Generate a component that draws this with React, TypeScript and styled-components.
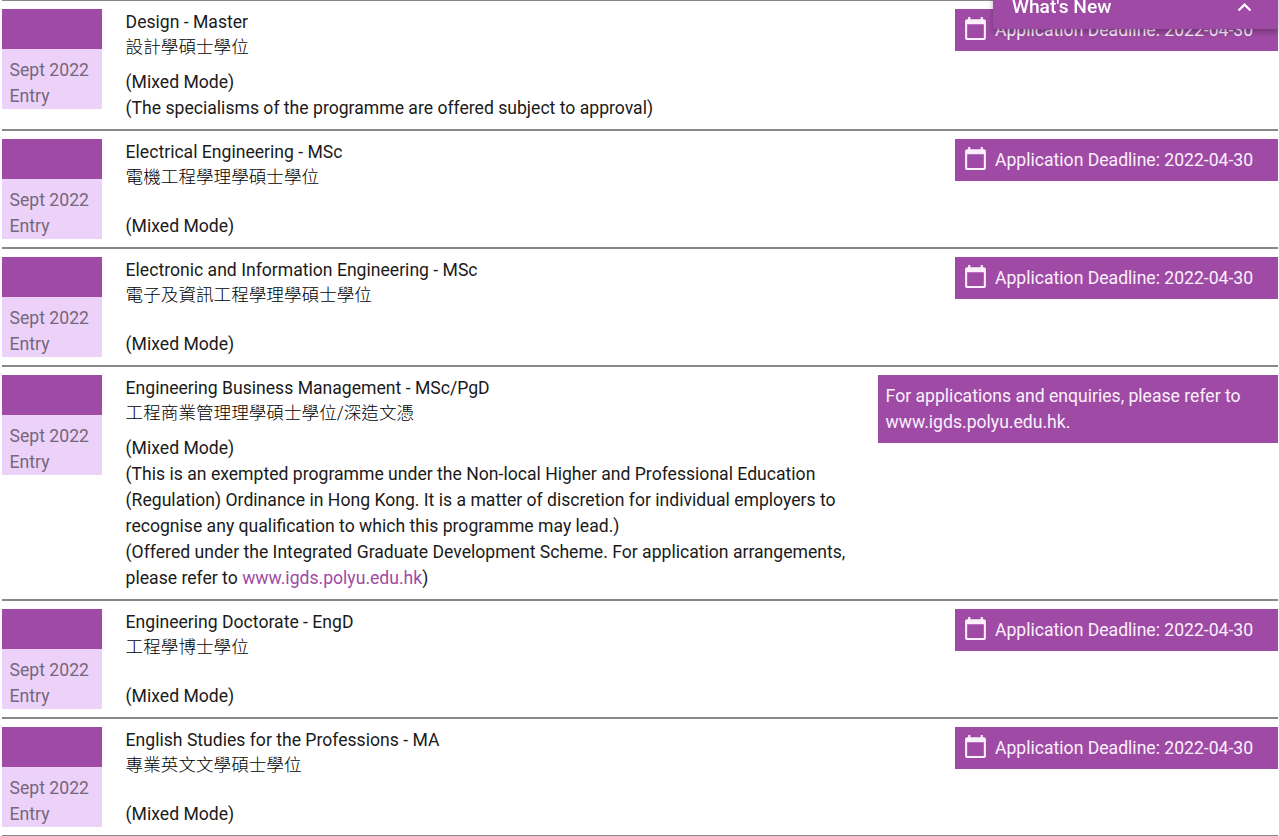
import React from 'react';
import styled, {createGlobalStyle} from 'styled-components';

const GlobalStyle = createGlobalStyle`
  html, body {
    margin: 0;
    height: 836px;
    overflow: hidden;
    background: #fff;
  }

  body {
    font-family: Roboto, "Noto Sans CJK TC", sans-serif;
    font-size: 17.6px;
    line-height: 26px;
    color: #1a1a1a;
  }
`;

const purple = '#9f4ba5';

const WhatsNew = styled.div`
  position: fixed;
  top: -15px;
  right: 1px;
  width: 285px;
  height: 44px;
  box-sizing: border-box;
  padding: 0 20px 0 19px;
  display: flex;
  justify-content: space-between;
  align-items: center;
  background: ${purple};
  color: #fff;
  font-size: 19.2px;
  font-weight: 500;
  box-shadow: 0 3px 6px rgba(0, 0, 0, 0.3);
`;

const List = styled.div`
  margin: 0 1px 0 2px;
  border-top: 1px solid #888;
`;

const Row = styled.div`
  display: flex;
  align-items: flex-start;
  padding: 8px 0;
  border-bottom: 2px solid #888;
`;

const EntryBadge = styled.div`
  flex: 0 0 100px;
  margin-right: 23.6px;
  background: #ecd2f8;
`;

const EntryBar = styled.div`
  height: 40px;
  background: ${purple};
`;

const EntryLabel = styled.div`
  height: 60px;
  padding: 8px 7.6px;
  box-sizing: border-box;
  color: #75677b;
`;

const Details = styled.div`
  flex: 1;
  min-height: 100px;
  display: flex;
  flex-direction: column;
  justify-content: space-between;
`;

const Heading = styled.div`
  margin-bottom: 8px;
`;

const ChineseName = styled.div`
  line-height: 24px;
  padding-bottom: 2px;
  font-weight: 300;
  color: #000;
`;

const Notes = styled.div``;

const NoteLink = styled.a`
  color: ${purple};
  text-decoration: none;
`;

const Deadline = styled.div`
  flex: 0 0 323px;
  box-sizing: border-box;
  height: 42px;
  padding: 0 8px;
  display: flex;
  align-items: center;
  gap: 7px;
  background: ${purple};
  color: #faf0fc;

  svg {
    margin-bottom: 3px;
  }
`;

const Notice = styled.div`
  flex: 0 0 400px;
  box-sizing: border-box;
  padding: 8px 7.6px;
  background: ${purple};
  color: #faf0fc;
`;

type Programme = {
  title: string;
  chinese: string;
  notes: React.ReactNode[];
  notice?: string;
};

const programmes: Programme[] = [
  {
    title: 'Design - Master',
    chinese: '設計學碩士學位',
    notes: ['(Mixed Mode)', '(The specialisms of the programme are offered subject to approval)'],
  },
  {
    title: 'Electrical Engineering - MSc',
    chinese: '電機工程學理學碩士學位',
    notes: ['(Mixed Mode)'],
  },
  {
    title: 'Electronic and Information Engineering - MSc',
    chinese: '電子及資訊工程學理學碩士學位',
    notes: ['(Mixed Mode)'],
  },
  {
    title: 'Engineering Business Management - MSc/PgD',
    chinese: '工程商業管理理學碩士學位/深造文憑',
    notes: [
      '(Mixed Mode)',
      '(This is an exempted programme under the Non-local Higher and Professional Education (Regulation) Ordinance in Hong Kong. It is a matter of discretion for individual employers to recognise any qualification to which this programme may lead.)',
      <>
        (Offered under the Integrated Graduate Development Scheme. For application arrangements, please refer to{' '}
        <NoteLink href="#">www.igds.polyu.edu.hk</NoteLink>)
      </>,
    ],
    notice: 'For applications and enquiries, please refer to www.igds.polyu.edu.hk.',
  },
  {
    title: 'Engineering Doctorate - EngD',
    chinese: '工程學博士學位',
    notes: ['(Mixed Mode)'],
  },
  {
    title: 'English Studies for the Professions - MA',
    chinese: '專業英文文學碩士學位',
    notes: ['(Mixed Mode)'],
  },
];

const CalendarIcon = () => (
  <svg width="25" height="25" viewBox="0 0 24 24" fill="currentColor">
    <path d="M20 3h-1V1h-2v2H7V1H5v2H4c-1.1 0-2 .9-2 2v16c0 1.1.9 2 2 2h16c1.1 0 2-.9 2-2V5c0-1.1-.9-2-2-2zm0 18H4V8h16v13z" />
  </svg>
);

const ChevronUpIcon = () => (
  <svg width="27" height="27" viewBox="0 0 24 24" fill="currentColor">
    <path d="M7.41 15.41L12 10.83l4.59 4.58L18 14l-6-6-6 6z" />
  </svg>
);

const App = () => {
  return (
    <>
      <GlobalStyle />
      <WhatsNew>
        <span>What's New</span>
        <ChevronUpIcon />
      </WhatsNew>
      <List>
        {programmes.map((item) => (
          <Row key={item.title}>
            <EntryBadge>
              <EntryBar />
              <EntryLabel>Sept 2022 Entry</EntryLabel>
            </EntryBadge>
            <Details>
              <Heading>
                <div>{item.title}</div>
                <ChineseName>{item.chinese}</ChineseName>
              </Heading>
              <Notes>
                {item.notes.map((note, index) => (
                  <div key={index}>{note}</div>
                ))}
              </Notes>
            </Details>
            {item.notice ? (
              <Notice>{item.notice}</Notice>
            ) : (
              <Deadline>
                <CalendarIcon />
                Application Deadline: 2022-04-30
              </Deadline>
            )}
          </Row>
        ))}
      </List>
    </>
  );
};

export default App;
